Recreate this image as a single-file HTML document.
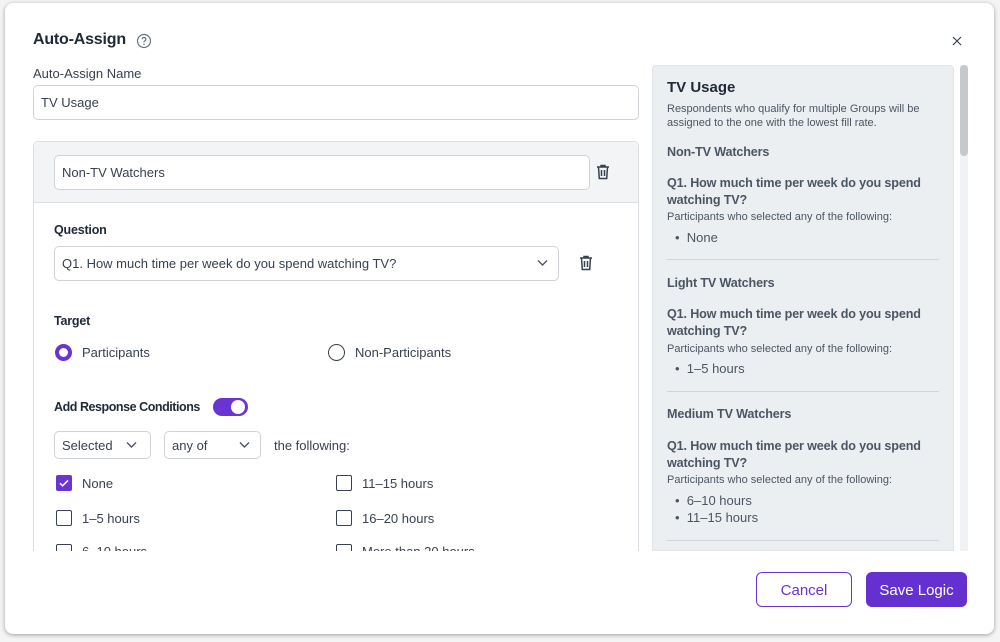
<!DOCTYPE html>
<html><head><style>
*{box-sizing:border-box;margin:0;padding:0}
body{width:1000px;height:642px;background:#f4f4f5;font-family:"Liberation Sans",sans-serif;color:#1f2937;position:relative;overflow:hidden}
.a{position:absolute}
.modal{left:5px;top:3px;width:989px;height:631px;background:#fff;border-radius:8px;box-shadow:0 1px 4px rgba(0,0,0,.35)}
.inp{border:1px solid #cfd3d8;border-radius:5px;background:#fff;font-size:13px;color:#374151;padding-left:7px;display:flex;align-items:center}
.lbl{font-size:13px;color:#374151}
.b{font-weight:bold;font-size:12.5px;color:#1f2937;letter-spacing:-.2px}
.cb{width:16px;height:16px;border:1.5px solid #374151;border-radius:2px}
.rp{font-size:13px;color:#4b5563}
.bb{font-weight:bold;font-size:12.6px;letter-spacing:-.15px}
.sm{font-size:11px;color:#4b5563}
.hr{height:1px;background:#d1d5db;left:667px;width:272px}
</style></head><body>
<div class="a modal"></div>
<div class="a" style="left:33px;top:31px;font-size:16px;font-weight:bold;color:#1f2937;letter-spacing:-.2px">Auto-Assign</div>
<svg class="a" style="left:136px;top:33px" width="16" height="16" viewBox="0 0 16 16"><circle cx="8" cy="8" r="6.5" fill="none" stroke="#6b7280" stroke-width="1.2"/><path d="M6.2 6.3a1.8 1.8 0 1 1 2.4 1.7c-.5.2-.6.5-.6 1v.4" fill="none" stroke="#6b7280" stroke-width="1.2"/><circle cx="8" cy="11.2" r=".8" fill="#6b7280"/></svg>
<svg class="a" style="left:952px;top:36px" width="10" height="10" viewBox="0 0 10 10"><path d="M1 1l8 8M9 1l-8 8" stroke="#374151" stroke-width="1.2"/></svg>
<div class="a lbl" style="left:33px;top:66px">Auto-Assign Name</div>
<div class="a inp" style="left:33px;top:85px;width:606px;height:35px">TV Usage</div>
<div class="a" style="left:33px;top:141px;width:606px;height:420px;border:1px solid #dcdfe3;border-radius:5px;background:#fff"></div>
<div class="a" style="left:34px;top:142px;width:604px;height:61px;background:#f3f4f6;border-bottom:1px solid #dcdfe3;border-radius:5px 5px 0 0"></div>
<div class="a inp" style="left:54px;top:155px;width:536px;height:35px">Non-TV Watchers</div>
<svg class="a" style="left:596px;top:164px" width="14" height="16" viewBox="0 0 14 16"><path d="M1 3h12M5 3V1.5h4V3M2.5 3l.8 11.5h7.4L11.5 3M5.5 6v6M8.5 6v6" fill="none" stroke="#374151" stroke-width="1.5"/></svg>
<div class="a b" style="left:54px;top:223px">Question</div>
<div class="a inp" style="left:54px;top:246px;width:505px;height:35px">Q1. How much time per week do you spend watching TV?</div>
<svg class="a" style="left:537px;top:259px" width="11" height="8" viewBox="0 0 11 8"><path d="M1 1.5l4.5 4.5 4.5-4.5" fill="none" stroke="#4b5563" stroke-width="1.4"/></svg>
<svg class="a" style="left:579px;top:255px" width="14" height="16" viewBox="0 0 14 16"><path d="M1 3h12M5 3V1.5h4V3M2.5 3l.8 11.5h7.4L11.5 3M5.5 6v6M8.5 6v6" fill="none" stroke="#374151" stroke-width="1.5"/></svg>
<div class="a b" style="left:54px;top:314px">Target</div>
<div class="a" style="left:55px;top:344px;width:17px;height:17px;border-radius:50%;border:4.5px solid #6934d1"></div>
<div class="a lbl" style="left:82px;top:345px">Participants</div>
<div class="a" style="left:328px;top:344px;width:17px;height:17px;border-radius:50%;border:1.5px solid #374151"></div>
<div class="a lbl" style="left:355px;top:345px">Non-Participants</div>
<div class="a b" style="left:54px;top:400px;letter-spacing:-.45px">Add Response Conditions</div>
<div class="a" style="left:213px;top:398px;width:35px;height:18px;border-radius:9px;background:#6934d1"></div>
<div class="a" style="left:231px;top:400px;width:14px;height:14px;border-radius:50%;background:#fff"></div>
<div class="a inp" style="left:54px;top:431px;width:97px;height:28px">Selected</div>
<svg class="a" style="left:126px;top:441px" width="11" height="8" viewBox="0 0 11 8"><path d="M1 1.5l4.5 4.5 4.5-4.5" fill="none" stroke="#4b5563" stroke-width="1.4"/></svg>
<div class="a inp" style="left:164px;top:431px;width:97px;height:28px">any of</div>
<svg class="a" style="left:239px;top:441px" width="11" height="8" viewBox="0 0 11 8"><path d="M1 1.5l4.5 4.5 4.5-4.5" fill="none" stroke="#4b5563" stroke-width="1.4"/></svg>
<div class="a lbl" style="left:274px;top:438px">the following:</div>
<div class="a" style="left:56px;top:475px;width:16px;height:16px;background:#6934d1;border-radius:2px"></div>
<svg class="a" style="left:56px;top:475px" width="16" height="16" viewBox="0 0 16 16"><path d="M4 8.2l2.6 2.6L12 5.4" fill="none" stroke="#fff" stroke-width="1.6"/></svg>
<div class="a lbl" style="left:82px;top:476px">None</div>
<div class="a cb" style="left:336px;top:475px"></div><div class="a lbl" style="left:362px;top:476px">11–15 hours</div>
<div class="a cb" style="left:56px;top:510px"></div><div class="a lbl" style="left:82px;top:511px">1–5 hours</div>
<div class="a cb" style="left:336px;top:510px"></div><div class="a lbl" style="left:362px;top:511px">16–20 hours</div>
<div class="a" style="left:40px;top:540px;width:590px;height:11px;overflow:hidden">
<div class="a cb" style="left:16px;top:4px"></div><div class="a lbl" style="left:42px;top:4px">6–10 hours</div>
<div class="a cb" style="left:296px;top:4px"></div><div class="a lbl" style="left:322px;top:4px">More than 20 hours</div></div>
<div class="a" style="left:6px;top:551px;width:987px;height:82px;background:#fff;border-radius:0 0 8px 8px"></div>
<div class="a" style="left:652px;top:65px;width:302px;height:486px;background:#eceff2;border:1px solid #e1e4e8;border-radius:4px 4px 0 0"></div>
<div class="a" style="left:960px;top:65px;width:8px;height:486px;background:#f1f2f4"></div>
<div class="a" style="left:960px;top:65px;width:8px;height:91px;background:#c5c9ce;border-radius:4px"></div>
<div class="a rp" style="left:667px;top:79px;font-size:15px;font-weight:bold;color:#1f2937">TV Usage</div>
<div class="a sm" style="left:667px;top:102px;line-height:14px">Respondents who qualify for multiple Groups will be<br>assigned to the one with the lowest fill rate.</div>
<div class="a rp bb" style="left:667px;top:145px">Non-TV Watchers</div>
<div class="a rp bb" style="left:667px;top:175px;line-height:17px">Q1. How much time per week do you spend<br>watching TV?</div>
<div class="a sm" style="left:667px;top:211px">Participants who selected any of the following:</div>
<div class="a rp" style="left:675px;top:230px">• &nbsp;None</div>
<div class="a hr" style="top:259px"></div>
<div class="a rp bb" style="left:667px;top:276px">Light TV Watchers</div>
<div class="a rp bb" style="left:667px;top:306px;line-height:17px">Q1. How much time per week do you spend<br>watching TV?</div>
<div class="a sm" style="left:667px;top:343px">Participants who selected any of the following:</div>
<div class="a rp" style="left:675px;top:361px">• &nbsp;1–5 hours</div>
<div class="a hr" style="top:391px"></div>
<div class="a rp bb" style="left:667px;top:407px">Medium TV Watchers</div>
<div class="a rp bb" style="left:667px;top:438px;line-height:17px">Q1. How much time per week do you spend<br>watching TV?</div>
<div class="a sm" style="left:667px;top:474px">Participants who selected any of the following:</div>
<div class="a rp" style="left:675px;top:493px">• &nbsp;6–10 hours</div>
<div class="a rp" style="left:675px;top:510px">• &nbsp;11–15 hours</div>
<div class="a hr" style="top:540px"></div>
<div class="a" style="left:756px;top:572px;width:96px;height:35px;border:1px solid #6934d1;border-radius:6px;color:#6934d1;font-size:15px;display:flex;align-items:center;justify-content:center;padding-top:2px">Cancel</div>
<div class="a" style="left:866px;top:572px;width:101px;height:35px;background:#6430d0;border-radius:6px;color:#fff;font-size:15px;display:flex;align-items:center;justify-content:center;padding-top:2px">Save Logic</div>
</body></html>
